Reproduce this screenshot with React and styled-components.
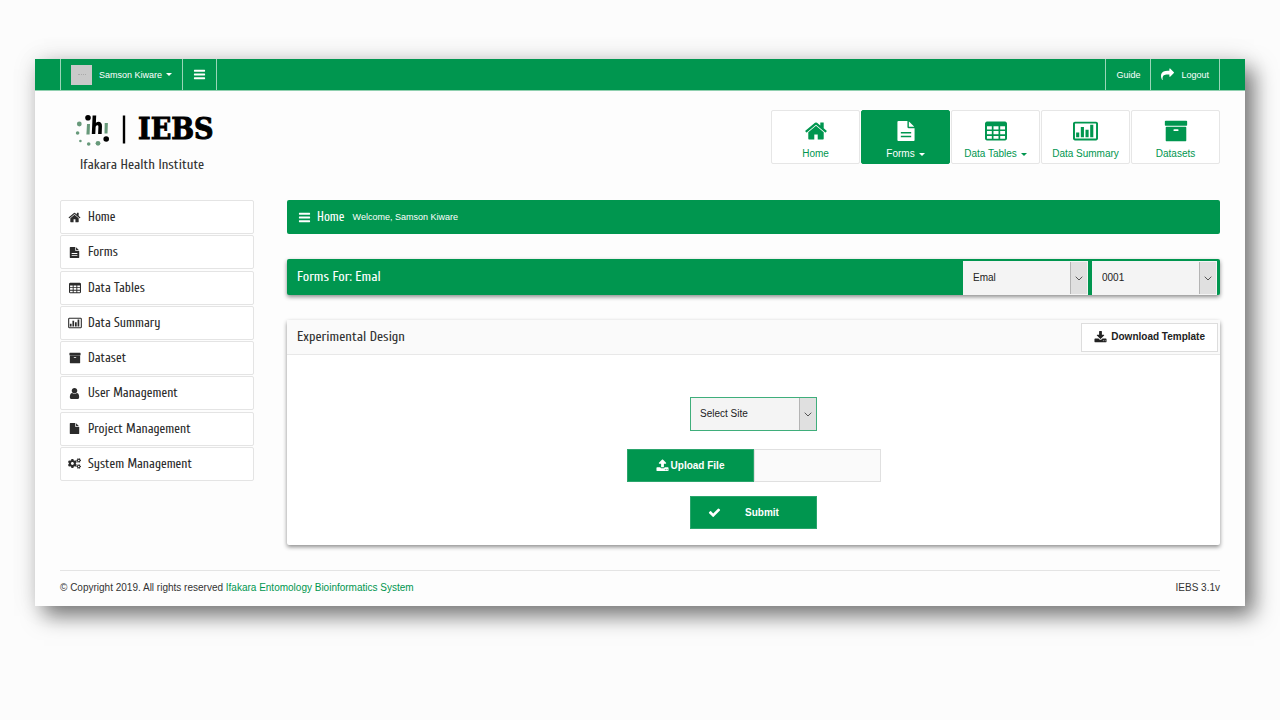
import React from "react";
import styled, { createGlobalStyle, css } from "styled-components";
import { FaCogs } from "react-icons/fa";

const GREEN = "#00964f";
const SANS = '"Liberation Sans", Arial, sans-serif';
const NARROW = 'Cuprum, "Roboto Condensed", "Open Sans Condensed", sans-serif';

const Global = createGlobalStyle`
  *, *::before, *::after { box-sizing: border-box; }
  body { margin: 0; background: #fcfcfc; color: #333; font: 10px/16px ${SANS}; }
  a { color: inherit; text-decoration: none; }
  button, select, input { font: inherit; margin: 0; border-radius: 0; }
  h1, h2, p, ul { margin: 0; padding: 0; font-weight: normal; }
  ul { list-style: none; }
`;

/* ---------- icons ---------- */
const PATHS = {
  home: "M1472 992v480q0 26-19 45t-45 19h-384v-384h-256v384h-384q-26 0-45-19t-19-45v-480q0-1 .5-3t.5-3l575-474 575 474q1 2 1 6zm223-69l-62 74q-8 9-21 11h-3q-13 0-21-7l-692-577-692 577q-12 8-24 7-13-2-21-11l-62-74q-8-10-7-23.5t11-21.5l719-599q32-26 76-26t76 26l244 204v-195q0-14 9-23t23-9h192q14 0 23 9t9 23v408l219 182q10 8 11 21.5t-7 23.5z",
  fileText: "M1596 476q14 14 28 36h-472v-472q22 14 36 28zm-476 164h544v1056q0 40-28 68t-68 28h-1344q-40 0-68-28t-28-68v-1600q0-40 28-68t68-28h800v544q0 40 28 68t68 28zm240 816v-128h-928v128zm0-336v-128h-928v128z",
  file: "M1596 476q14 14 28 36h-472v-472q22 14 36 28zm-476 164h544v1056q0 40-28 68t-68 28h-1344q-40 0-68-28t-28-68v-1600q0-40 28-68t68-28h800v544q0 40 28 68t68 28z",
  table: "M160 128h1472q66 0 113 47t47 113v1216q0 66-47 113t-113 47h-1472q-66 0-113-47t-47-113v-1216q0-66 47-113t113-47zM160 512v256h394v-256zM692 512v256h408v-256zM1238 512v256h394v-256zM160 906v256h394v-256zM692 906v256h408v-256zM1238 906v256h394v-256zM160 1300v224h394v-224zM692 1300v224h408v-224zM1238 1300v224h394v-224z",
  chart: "M160 128h1728q66 0 113 47t47 113v1216q0 66-47 113t-113 47h-1728q-66 0-113-47t-47-113v-1216q0-66 47-113t113-47zM192 276q-32 0-32 32v1176q0 32 32 32h1664q32 0 32-32v-1176q0-32-32-32zM256 1024h256v384h-256zM640 576h256v832h-256zM1024 800h256v608h-256zM1408 384h256v1024h-256z",
  archive: "M1088 832q0-26-19-45t-45-19h-256q-26 0-45 19t-19 45 19 45 45 19h256q26 0 45-19t19-45zm576-192v960q0 26-19 45t-45 19h-1408q-26 0-45-19t-19-45v-960q0-26 19-45t45-19h1408q26 0 45 19t19 45zm64-448v256q0 26-19 45t-45 19h-1536q-26 0-45-19t-19-45v-256q0-26 19-45t45-19h1536q26 0 45 19t19 45z",
  bars: "M1664 1344v128q0 26-19 45t-45 19h-1408q-26 0-45-19t-19-45v-128q0-26 19-45t45-19h1408q26 0 45 19t19 45zm0-512v128q0 26-19 45t-45 19h-1408q-26 0-45-19t-19-45v-128q0-26 19-45t45-19h1408q26 0 45 19t19 45zm0-512v128q0 26-19 45t-45 19h-1408q-26 0-45-19t-19-45v-128q0-26 19-45t45-19h1408q26 0 45 19t19 45z",
  share: "M1792 640q0 26-19 45l-512 512q-19 19-45 19t-45-19-19-45v-256h-224q-98 0-175.5 6t-154 21.5-133 42.5-105.5 69.5-80 101-48.5 138.5-17.5 181q0 55 5 123 0 6 2.5 23.5t2.5 26.5q0 15-8.5 25t-23.5 10q-16 0-28-17-7-9-13-22t-13.5-30-10.5-24q-127-285-127-451 0-199 53-333 162-403 875-403h224v-256q0-26 19-45t45-19 45 19l512 512q19 19 19 45z",
  user: "M1536 1399q0 109-62.5 187t-150.5 78h-854q-88 0-150.5-78t-62.5-187q0-85 8.5-160.5t31.5-152 58.5-131 94-89 134.500-34.500q131 128 313 128t313-128q76 0 134.500 34.500t94 89 58.500 131 31.500 152 8.500 160.500zm-256-887q0 159-112.500 271.500t-271.500 112.500-271.500-112.500-112.500-271.500 112.500-271.500 271.500-112.500 271.500 112.500 112.500 271.500z",
  download: "M1344 1344q0-26-19-45t-45-19-45 19-19 45 19 45 45 19 45-19 19-45zm256 0q0-26-19-45t-45-19-45 19-19 45 19 45 45 19 45-19 19-45zm128-224v320q0 40-28 68t-68 28h-1472q-40 0-68-28t-28-68v-320q0-40 28-68t68-28h465l135 136q58 56 136 56t136-56l136-136h464q40 0 68 28t28 68zm-325-569q17 41-14 70l-448 448q-18 19-45 19t-45-19l-448-448q-31-29-14-70 17-39 59-39h256v-448q0-26 19-45t45-19h256q26 0 45 19t19 45v448h256q42 0 59 39z",
  upload: "M1344 1472q0-26-19-45t-45-19-45 19-19 45 19 45 45 19 45-19 19-45zm256 0q0-26-19-45t-45-19-45 19-19 45 19 45 45 19 45-19 19-45zm128-224v320q0 40-28 68t-68 28h-1472q-40 0-68-28t-28-68v-320q0-40 28-68t68-28h427q21 56 70.500 92t110.500 36h256q61 0 110.500-36t70.500-92h427q40 0 68 28t28 68zm-325-648q-17 40-59 40h-256v448q0 26-19 45t-45 19h-256q-26 0-45-19t-19-45v-448h-256q-42 0-59-40-17-39 14-69l448-448q18-19 45-19t45 19l448 448q31 30 14 69z",
  check: "M1671 566q0 40-28 68l-724 724-136 136q-28 28-68 28t-68-28l-136-136-362-362q-28-28-28-68t28-68l136-136q28-28 68-28t68 28l294 295 656-657q28-28 68-28t68 28l136 136q28 28 28 68z",
};

const Svg = styled.svg`
  flex: none;
  display: block;
  fill: currentColor;
`;

function Icon({ name, size = 12 }) {
  const wide = name === "chart";
  return (
    <Svg viewBox={wide ? "0 0 2048 1792" : "0 0 1792 1792"} width={wide ? Math.round((size * 8) / 7) : size} height={size} aria-hidden="true">
      <path fillRule="evenodd" d={PATHS[name]} />
    </Svg>
  );
}

const Caret = styled.span`
  border: 3px solid transparent;
  border-top-color: currentColor;
  border-bottom: 0;
  margin-left: 4px;
`;

/* ---------- frame and top bar ---------- */
const Frame = styled.div`
  margin: 59px 35px;
  background: #fdfdfd;
  box-shadow: 9px 10px 20px rgba(0, 0, 0, 0.5), 0 0 24px rgba(0, 0, 0, 0.1);
`;

const TopBar = styled.header`
  display: flex;
  justify-content: space-between;
  height: 32px;
  padding: 0 25px;
  background: ${GREEN};
  border-bottom: 1px solid #8fd0af;
  color: #fff;
  font-size: 9px;
`;

const TopGroup = styled.div`
  display: flex;
  border-left: 1px solid #9ad5b8;
`;

const barItem = css`
  display: flex;
  align-items: center;
  gap: ${(p) => p.$gap || 0}px;
  padding: 0 10px;
  border: 0;
  border-right: 1px solid #9ad5b8;
  background: none;
  color: inherit;
`;
const TopButton = styled.button`${barItem}`;
const TopLink = styled.a`${barItem}`;

const Avatar = styled.span`
  width: 21px;
  height: 20px;
  margin-right: 7px;
  background: #c9c9c9;
  display: grid;
  place-items: center;
  &::after {
    content: "";
    width: 8px;
    border-top: 1px dotted #aaa;
  }
`;

/* ---------- brand row ---------- */
const BrandRow = styled.div`
  display: flex;
  justify-content: space-between;
  align-items: flex-start;
  padding: 19px 25px 0;
  min-height: 109px;
`;

const Brand = styled.a`
  padding-left: 15px;
  color: #333;
`;

const LogoLine = styled.span`
  display: flex;
  align-items: center;
  height: 38px;
`;

const LogoName = styled.span`
  margin-left: 11px;
  font: bold 30px/40px "DejaVu Serif Condensed", "DejaVu Serif", serif;
  color: #000;
  -webkit-text-stroke: 1px #000;
`;

const Tagline = styled.span`
  display: block;
  margin-top: 8px;
  padding-left: 5px;
  font: 14px/18px ${NARROW};
`;

const Tabs = styled.nav`
  display: flex;
  gap: 1px;
`;

const Tab = styled.a`
  display: flex;
  flex-direction: column;
  align-items: center;
  justify-content: space-between;
  width: 89px;
  height: 54px;
  padding: 8px 0 1px;
  border: 1px solid ${(p) => (p.$active ? GREEN : "#e6e6e6")};
  border-radius: 2px;
  background: ${(p) => (p.$active ? GREEN : "#fff")};
  color: ${(p) => (p.$active ? "#fff" : GREEN)};
`;

const TabIcon = styled.span`
  display: flex;
  align-items: center;
  height: 24px;
`;

const TabLabel = styled.span`
  display: flex;
  align-items: center;
`;

/* ---------- body ---------- */
const Body = styled.div`
  display: flex;
  align-items: flex-start;
  gap: 33px;
  padding: 0 25px 25px;
`;

const SideMenu = styled.ul`
  width: 194px;
  min-height: 281px;
  display: flex;
  flex-direction: column;
  justify-content: space-between;
`;

const SideLink = styled.a`
  display: flex;
  align-items: center;
  gap: 7px;
  height: 34px;
  padding: 0 7px;
  border: 1px solid #e4e4e4;
  border-radius: 2px;
  background: #fff;
  color: #2b2b2b;
  font: 13px/18px ${NARROW};
`;

const SideIcon = styled.span`
  display: flex;
  justify-content: center;
  width: 13px;
`;

const Main = styled.main`
  flex: 1;
  min-width: 0;
`;

const Crumb = styled.div`
  display: flex;
  align-items: center;
  height: 34px;
  padding: 0 11px;
  border-radius: 2px;
  background: ${GREEN};
  color: #fff;
  font-size: 9px;
`;

const CrumbTitle = styled.h1`
  margin: 0 8px 0 6px;
  font: 13px/18px ${NARROW};
`;

const raised = css`
  border-radius: 2px;
  box-shadow: 0 2px 4px rgba(0, 0, 0, 0.45);
`;

const FormsBar = styled.section`
  ${raised}
  display: flex;
  align-items: center;
  gap: 4px;
  height: 36px;
  margin-top: 25px;
  padding: 2px 3px 0 10px;
  background: ${GREEN};
  color: #fff;
`;

const BarTitle = styled.h2`
  flex: 1;
  padding-bottom: ${(p) => (p.$raised ? 2 : 0)}px;
  font: 14px/18px ${NARROW};
`;

const SelectBox = styled.span`
  position: relative;
  display: block;
  width: ${(p) => (p.$outlined ? 127 : 125)}px;
  height: 34px;
  border: 1px solid ${(p) => (p.$outlined ? "#3fae7b" : "#f4f4f4")};
`;

const NativeSelect = styled.select`
  appearance: none;
  display: block;
  width: 100%;
  height: 100%;
  padding: 0 24px 0 9px;
  border: 0;
  background: #f4f4f4;
  color: #222;
`;

const SelectArrow = styled.span`
  position: absolute;
  top: 0;
  right: 0;
  bottom: 0;
  width: 17px;
  display: grid;
  place-items: center;
  background: #e0e0e0;
  border-left: 1px solid #b4b4b4;
  color: #555;
  pointer-events: none;
`;

const Card = styled.section`
  ${raised}
  margin-top: 25px;
  background: #fff;
`;

const CardHead = styled.div`
  display: flex;
  align-items: center;
  height: 35px;
  padding: 0 2px 0 10px;
  border-bottom: 1px solid #e8e8e8;
  background: #fafafa;
`;

const Download = styled.button`
  display: flex;
  align-items: center;
  gap: 4px;
  height: 29px;
  padding: 0 12px;
  border: 1px solid #ddd;
  background: #fff;
  color: #222;
  font-weight: bold;
`;

const Form = styled.form`
  display: flex;
  flex-direction: column;
  align-items: center;
  padding: 42px 0 16px;
`;

const UploadRow = styled.div`
  display: flex;
  margin: 18px 0 14px;
`;

const GreenButton = styled.button`
  display: flex;
  align-items: center;
  justify-content: ${(p) => (p.$spread ? "flex-start" : "center")};
  gap: ${(p) => (p.$spread ? 24 : 2)}px;
  width: 127px;
  height: 33px;
  padding: 0 17px;
  border: 1px solid #2aa56c;
  background: ${GREEN};
  color: #fff;
  font-weight: bold;
`;

const FileName = styled.input`
  width: 127px;
  height: 33px;
  padding: 0 8px;
  border: 1px solid #e0e0e0;
  background: #fafafa;
`;

const Footer = styled.footer`
  display: flex;
  justify-content: space-between;
  margin: 0 25px;
  padding: 9px 0 10px;
  border-top: 1px solid #e4e4e4;
  a { color: ${GREEN}; }
`;

function LogoMark() {
  return (
    <svg width="52" height="38" viewBox="0 0 52 38" aria-hidden="true">
      <g fill="#67997a">
        <circle cx="4.3" cy="14" r="2.4" />
        <circle cx="2.6" cy="23" r="1.8" />
        <circle cx="5.4" cy="31" r="1.3" />
        <circle cx="13.7" cy="34" r="1.8" />
        <circle cx="23" cy="33.300" r="2.400" />
        <path d="M12 14h3l-.4 10.500h-3.200zM29.700 13h3.200l-.4 10.500h-3z" />
      </g>
      <circle cx="13" cy="7.800" r="2.800" />
      <circle cx="31.200" cy="29" r="2.800" />
      <path d="M17.600 5.500h3.600l-.3 7.300c3-2.200 6.300-.6 6.100 3.400l-.3 7.800h-3.600l.3-7.200c.1-2.400-2.700-1.800-2.800.6l-.3 6.600h-3.500z" />
      <path d="M47.800 5.500h2.400v28h-2.400z" />
    </svg>
  );
}

function Select({ label, options, outlined }) {
  return (
    <SelectBox $outlined={outlined}>
      <NativeSelect aria-label={label}>
        {options.map((o) => <option key={o}>{o}</option>)}
      </NativeSelect>
      <SelectArrow>
        <svg width="8" height="5" viewBox="0 0 8 5" fill="none" stroke="currentColor" aria-hidden="true">
          <path d="M.7.700 4 4l3.300-3.300" />
        </svg>
      </SelectArrow>
    </SelectBox>
  );
}

const TABS = [
  { label: "Home", icon: "home", size: 24 },
  { label: "Forms", icon: "fileText", size: 20, caret: true, active: true },
  { label: "Data Tables", icon: "table", size: 22, caret: true },
  { label: "Data Summary", icon: "chart", size: 22 },
  { label: "Datasets", icon: "archive", size: 24 },
];

const MENU = [
  { label: "Home", icon: "home", size: 13 },
  { label: "Forms", icon: "fileText", size: 11 },
  { label: "Data Tables", icon: "table", size: 12 },
  { label: "Data Summary", icon: "chart", size: 12 },
  { label: "Dataset", icon: "archive", size: 12 },
  { label: "User Management", icon: "user", size: 13 },
  { label: "Project Management", icon: "file", size: 11 },
  { label: "System Management", icon: "cogs" },
];

export default function App() {
  return (
    <>
      <Global />
      <Frame>
        <TopBar>
          <TopGroup>
            <TopButton type="button"><Avatar />Samson Kiware<Caret /></TopButton>
            <TopButton type="button" aria-label="Toggle menu"><Icon name="bars" size={13} /></TopButton>
          </TopGroup>
          <TopGroup>
            <TopLink href="#guide">Guide</TopLink>
            <TopLink href="#logout" $gap={7}><Icon name="share" size={13} />Logout</TopLink>
          </TopGroup>
        </TopBar>

        <BrandRow>
          <Brand href="#home">
            <LogoLine><LogoMark /><LogoName>IEBS</LogoName></LogoLine>
            <Tagline>Ifakara Health Institute</Tagline>
          </Brand>
          <Tabs>
            {TABS.map((t) => (
              <Tab key={t.label} href="#" $active={t.active}>
                <TabIcon><Icon name={t.icon} size={t.size} /></TabIcon>
                <TabLabel>{t.label}{t.caret && <Caret />}</TabLabel>
              </Tab>
            ))}
          </Tabs>
        </BrandRow>

        <Body>
          <SideMenu>
            {MENU.map((m) => (
              <li key={m.label}>
                <SideLink href="#">
                  <SideIcon>{m.icon === "cogs" ? <FaCogs size={13} /> : <Icon name={m.icon} size={m.size} />}</SideIcon>
                  {m.label}
                </SideLink>
              </li>
            ))}
          </SideMenu>

          <Main>
            <Crumb>
              <Icon name="bars" size={13} />
              <CrumbTitle>Home</CrumbTitle>
              <span>Welcome, Samson Kiware</span>
            </Crumb>

            <FormsBar>
              <BarTitle $raised>Forms For: Emal</BarTitle>
              <Select label="Project" options={["Emal"]} />
              <Select label="Experiment" options={["0001"]} />
            </FormsBar>

            <Card>
              <CardHead>
                <BarTitle>Experimental Design</BarTitle>
                <Download type="button"><Icon name="download" size={13} />Download Template</Download>
              </CardHead>
              <Form>
                <Select label="Site" options={["Select Site"]} outlined />
                <UploadRow>
                  <GreenButton type="button"><Icon name="upload" size={13} />Upload File</GreenButton>
                  <FileName type="text" aria-label="Selected file" readOnly />
                </UploadRow>
                <GreenButton type="button" $spread><Icon name="check" size={13} />Submit</GreenButton>
              </Form>
            </Card>
          </Main>
        </Body>

        <Footer>
          <p>© Copyright 2019. All rights reserved <a href="#iebs">Ifakara Entomology Bioinformatics System</a></p>
          <p>IEBS 3.1v</p>
        </Footer>
      </Frame>
    </>
  );
}
